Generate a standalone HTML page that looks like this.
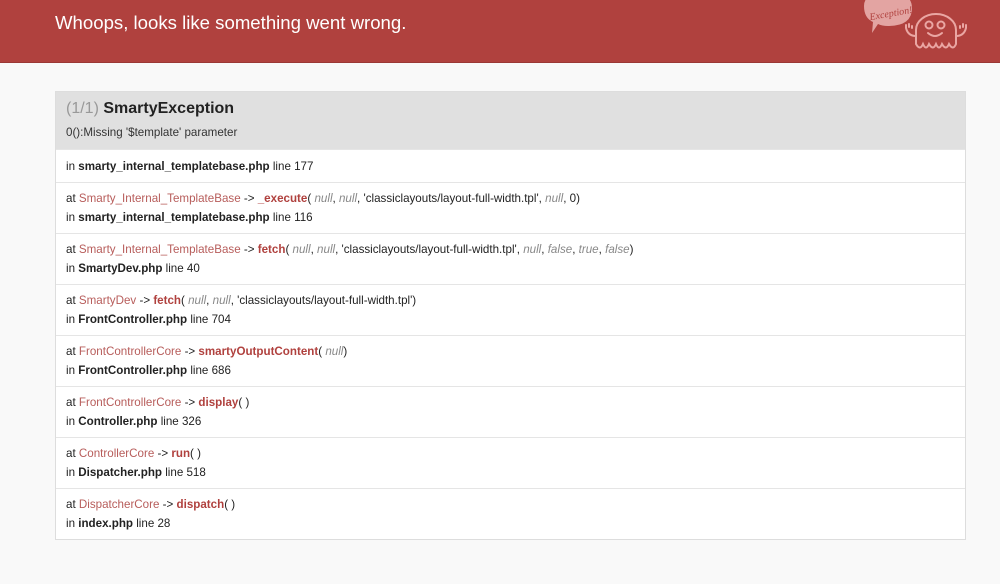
<!DOCTYPE html>
<html><head><meta charset="utf-8"><style>
*{margin:0;padding:0;box-sizing:border-box}
body{width:1000px;height:584px;background:#f9f9f9;font-family:"Liberation Sans",Arial,sans-serif;color:#222;overflow:hidden;position:relative}
.hdr{height:63px;background:#b0413e;border-bottom:1px solid #9a3835;position:relative}
.hdr h1{position:absolute;left:55px;top:12px;font-size:18.6px;font-weight:normal;color:#fff}
.box{position:absolute;left:55px;top:91px;width:911px;border:1px solid #ddd;background:#fff}
.top{background:#e0e0e0;height:57px;padding:8px 10px}
.top h2{font-size:16px;font-weight:bold;color:#222}
.top h2 span{color:#999;font-weight:normal}
.top p{font-size:11.6px;margin-top:8px;color:#333}
.row{border-top:1px solid #e5e5e5;padding:0 10px;font-size:11.6px;line-height:19px}
.r1{height:33px;padding-top:7px}
.r{height:51px;padding-top:6px}
.c{color:#b75c5a}
.f{color:#b0413e;font-weight:bold}
.n{color:#888;font-style:italic}
b{color:#222}
</style></head><body>
<div class="hdr"><h1>Whoops, looks like something went wrong.</h1>
<svg style="position:absolute;left:860px;top:0" width="110" height="60" viewBox="0 0 110 60">
<path d="M4 6 Q4 -8 28 -8 Q52 -8 52 8 Q52 26 28 26 Q22 26 18 24 L12 33 L13 22 Q4 18 4 6Z" fill="#e3a4a2"/>
<text x="9" y="17" font-family="Liberation Serif" font-style="italic" font-size="10" fill="#b0413e" transform="rotate(-10 28 12)">Exception!</text>
<g fill="none" stroke="#eaa6a3" stroke-width="2" stroke-linecap="round">
<path d="M56 44 V30 a20 16 0 0 1 40 0 V44 q-3 7 -7 0 q-3 7 -7 0 q-3 7 -6 0 q-3 7 -7 0 q-3 7 -6 0 q-3 7 -7 0Z"/>
<circle cx="69" cy="25" r="3.5"/><circle cx="81" cy="25" r="3.5"/>
<path d="M68 33 q7 6 14 0"/>
<path d="M56 36 q-8 0 -10 -8 M46 28 v-3 M49 27 v-3 M52 28 v-2"/>
<path d="M96 36 q8 0 10 -8 M106 28 v-3 M103 27 v-3 M100 28 v-2"/>
</g></svg></div>
<div class="box">
<div class="top"><h2><span>(1/1)</span> SmartyException</h2><p>0():Missing '$template' parameter</p></div>
<div class="row r1">in <b>smarty_internal_templatebase.php</b> line 177</div>
<div class="row r">at <span class="c">Smarty_Internal_TemplateBase</span> -&gt; <span class="f">_execute</span>( <span class="n">null</span>, <span class="n">null</span>, 'classiclayouts/layout-full-width.tpl', <span class="n">null</span>, 0)<br>in <b>smarty_internal_templatebase.php</b> line 116</div>
<div class="row r">at <span class="c">Smarty_Internal_TemplateBase</span> -&gt; <span class="f">fetch</span>( <span class="n">null</span>, <span class="n">null</span>, 'classiclayouts/layout-full-width.tpl', <span class="n">null</span>, <span class="n">false</span>, <span class="n">true</span>, <span class="n">false</span>)<br>in <b>SmartyDev.php</b> line 40</div>
<div class="row r">at <span class="c">SmartyDev</span> -&gt; <span class="f">fetch</span>( <span class="n">null</span>, <span class="n">null</span>, 'classiclayouts/layout-full-width.tpl')<br>in <b>FrontController.php</b> line 704</div>
<div class="row r">at <span class="c">FrontControllerCore</span> -&gt; <span class="f">smartyOutputContent</span>( <span class="n">null</span>)<br>in <b>FrontController.php</b> line 686</div>
<div class="row r">at <span class="c">FrontControllerCore</span> -&gt; <span class="f">display</span>( )<br>in <b>Controller.php</b> line 326</div>
<div class="row r">at <span class="c">ControllerCore</span> -&gt; <span class="f">run</span>( )<br>in <b>Dispatcher.php</b> line 518</div>
<div class="row r">at <span class="c">DispatcherCore</span> -&gt; <span class="f">dispatch</span>( )<br>in <b>index.php</b> line 28</div>
</div>
</body></html>
